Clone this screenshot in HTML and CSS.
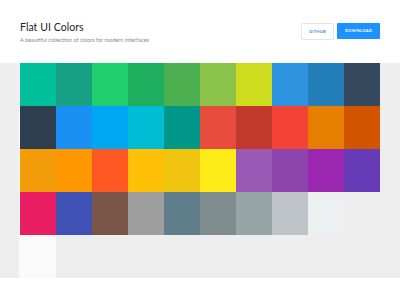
FILE: index.html
```html
<!DOCTYPE html>
<html lang="en">
<head>
    <meta charset="UTF-8">
    <meta name="viewport" content="width=device-width, initial-scale=1.0">
    <title>Flat UI Colors</title>
    <link rel="stylesheet" href="styles.css">
</head>
<body>
    <header class="header">
        <div class="brand">
            <h1>Flat UI Colors</h1>
            <p>A beautiful collection of colors for modern interfaces</p>
        </div>
        <div class="actions">
            <a class="btn btn-ghost" href="#">GITHUB</a>
            <a class="btn btn-primary" href="#">DOWNLOAD</a>
        </div>
    </header>
    <main class="palette">
        <div class="swatches" id="swatches">
            <!-- Tiles are inserted here -->
        </div>
    </main>
    <script>
        const colors = [
            "#00bf9a", "#16a085", "#22cf6e", "#1fad5e", "#4caf50", "#8bc34a", "#cddc1f", "#2f94e0", "#237eb9", "#34495e",
            "#2c3e50", "#1a90f5", "#00a8f4", "#00bcd4", "#009688", "#e74c3c", "#c0392b", "#f44336", "#e67e00", "#d35400",
            "#f39c0a", "#ff9800", "#ff5722", "#ffc107", "#f1c40f", "#ffeb18", "#9b59b6", "#8e44ad", "#9c27b0", "#673ab7",
            "#e91e63", "#3f51b5", "#795548", "#9e9e9e", "#607d8b", "#7f8c8d", "#95a5a6", "#bdc3c7", "#ecf0f1", "#eeeeee",
            "#fafafa"
        ];

        const swatches = document.getElementById("swatches");
        colors.forEach(color => {
            const tile = document.createElement("div");
            tile.className = "swatch";
            tile.style.background = color;
            tile.title = color;
            swatches.appendChild(tile);
        });
    </script>
</body>
</html>
```
FILE: styles.css
```css
body {
    font-family: Lato, "Open Sans", sans-serif;
    background-color: #fff;
    margin: 0;
    padding: 0;
}
.header {
    height: 63px;
    padding: 0 20px;
    display: flex;
    align-items: center;
    justify-content: space-between;
}
.brand h1 {
    margin: 0;
    font-size: 10.5px;
    font-weight: 400;
    color: #1d1d1d;
    letter-spacing: 0.05px;
}
.brand p {
    margin: 3px 0 0;
    font-size: 5.6px;
    color: #8a8a8a;
}
.actions {
    display: flex;
    gap: 3px;
    margin-top: -1px;
}
.btn {
    display: flex;
    align-items: center;
    justify-content: center;
    height: 16px;
    font-size: 4.2px;
    font-weight: 700;
    text-decoration: none;
    letter-spacing: 0.2px;
    border-radius: 1px;
    box-sizing: border-box;
}
.btn-ghost {
    width: 33px;
    height: 17px;
    color: #3a8ee6;
    background: #fff;
    border: 1px solid #e4e4e4;
}
.btn-primary {
    width: 43px;
    color: #fff;
    background-color: #1e90ff;
}
.palette {
    height: 215px;
    padding: 0 20px;
    background-color: #eeeeee;
}
.swatches {
    display: grid;
    grid-template-columns: repeat(10, 36px);
    grid-auto-rows: 43px;
    box-shadow: -1px 0 0 #fafafa;
}
.swatch {
    cursor: pointer;
}
.swatch:hover {
    opacity: 0.9;
}
```
